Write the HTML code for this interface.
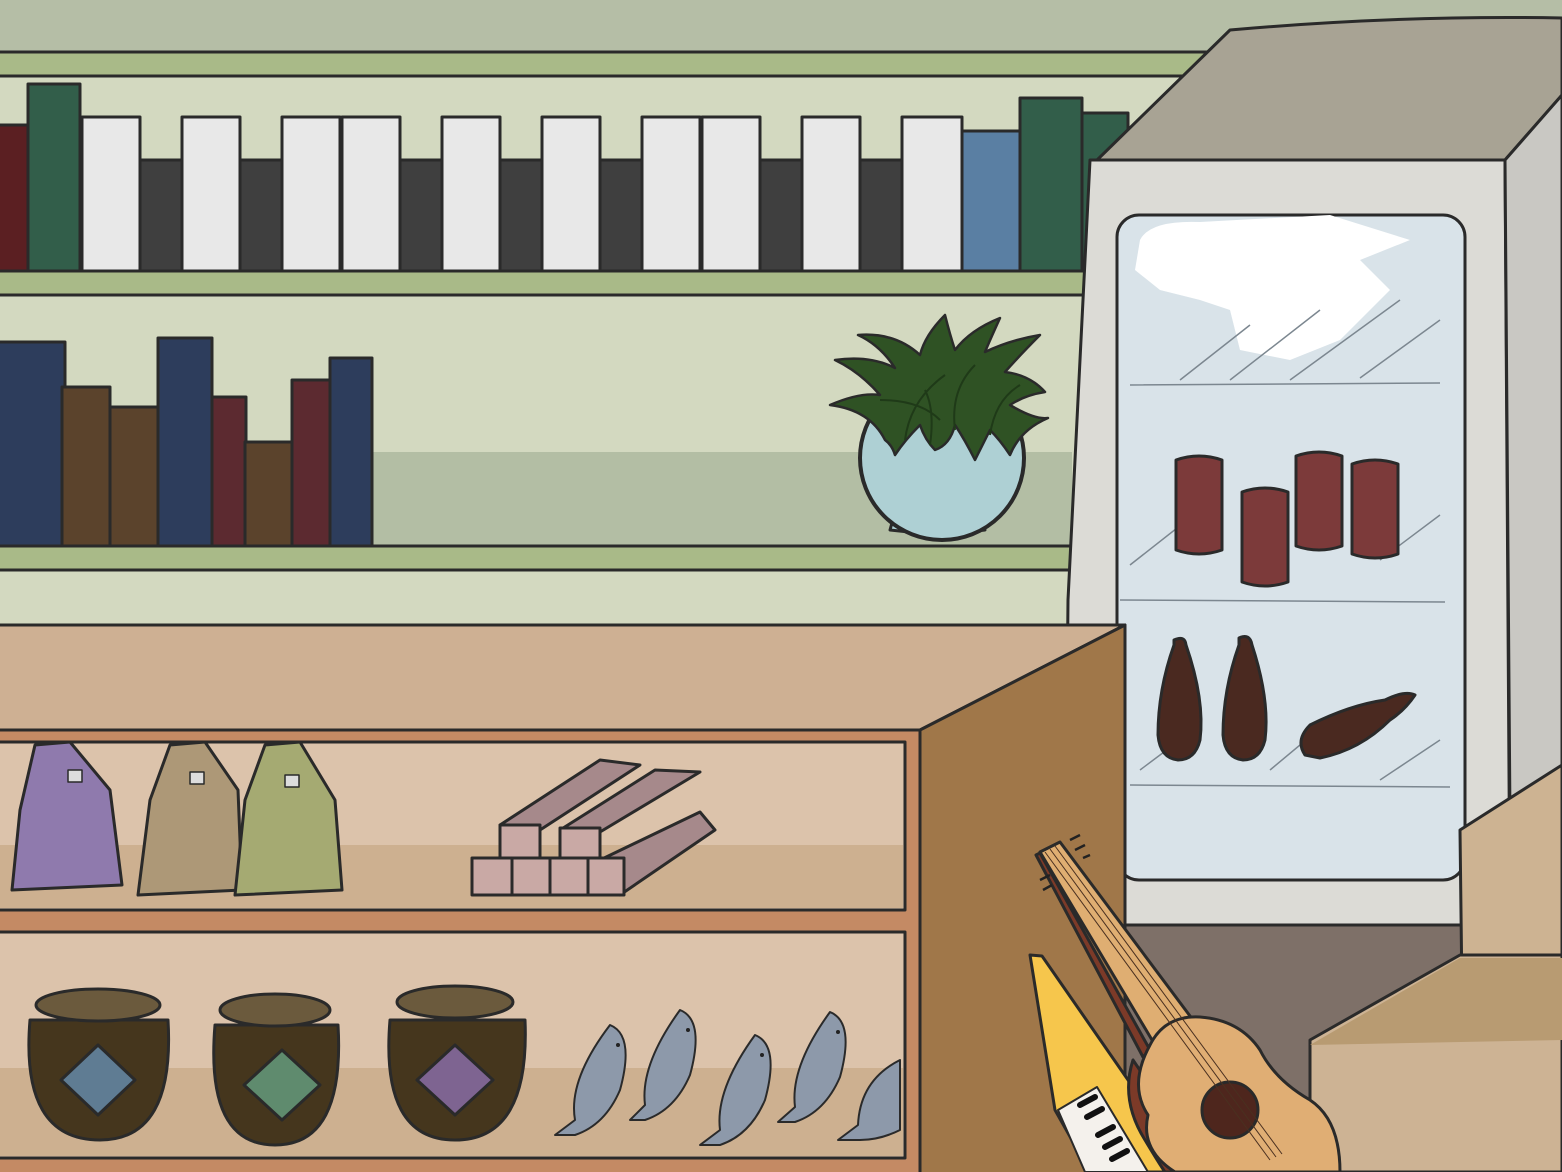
<!DOCTYPE html>
<html><head><meta charset="utf-8"><style>html,body{margin:0;padding:0;background:#d3d9c0}svg{display:block}</style></head>
<body>
<svg width="1562" height="1172" viewBox="0 0 1562 1172" xmlns="http://www.w3.org/2000/svg" stroke="#2a2a2a" stroke-width="3" stroke-linejoin="round">
<rect x="0" y="0" width="1562" height="1172" fill="#d3d9c0" stroke="none"/>
<rect x="0" y="0" width="1562" height="52" fill="#b5bea6" stroke="none"/>
<rect x="-5" y="52" width="1240" height="24" fill="#a9ba88"/>
<rect x="372" y="452" width="700" height="94" fill="#b3bea4" stroke="none"/>
<g>
<rect x="-5" y="125" width="33" height="147" fill="#5b1f22"/>
<rect x="28" y="84" width="52" height="188" fill="#325e4a"/>
<rect x="140" y="160" width="42" height="112" fill="#3f3f3f"/>
<rect x="240" y="160" width="42" height="112" fill="#3f3f3f"/>
<rect x="400" y="160" width="42" height="112" fill="#3f3f3f"/>
<rect x="500" y="160" width="42" height="112" fill="#3f3f3f"/>
<rect x="600" y="160" width="42" height="112" fill="#3f3f3f"/>
<rect x="760" y="160" width="42" height="112" fill="#3f3f3f"/>
<rect x="860" y="160" width="42" height="112" fill="#3f3f3f"/>
<rect x="82" y="117" width="58" height="155" fill="#e8e8e8"/>
<rect x="182" y="117" width="58" height="155" fill="#e8e8e8"/>
<rect x="282" y="117" width="58" height="155" fill="#e8e8e8"/>
<rect x="342" y="117" width="58" height="155" fill="#e8e8e8"/>
<rect x="442" y="117" width="58" height="155" fill="#e8e8e8"/>
<rect x="542" y="117" width="58" height="155" fill="#e8e8e8"/>
<rect x="642" y="117" width="58" height="155" fill="#e8e8e8"/>
<rect x="702" y="117" width="58" height="155" fill="#e8e8e8"/>
<rect x="802" y="117" width="58" height="155" fill="#e8e8e8"/>
<rect x="902" y="117" width="60" height="155" fill="#e8e8e8"/>
<rect x="962" y="131" width="58" height="141" fill="#5a7fa3"/>
<rect x="1020" y="98" width="62" height="174" fill="#325e4a"/>
<rect x="1082" y="113" width="46" height="159" fill="#325e4a"/>
</g>
<rect x="-5" y="271" width="1100" height="24" fill="#a9ba88"/>
<rect x="-5" y="342" width="70" height="205" fill="#2d3d5c"/>
<rect x="62" y="387" width="48" height="160" fill="#5b432c"/>
<rect x="110" y="407" width="48" height="140" fill="#5b432c"/>
<rect x="158" y="338" width="54" height="209" fill="#2d3d5c"/>
<rect x="212" y="397" width="34" height="150" fill="#5c2a30"/>
<rect x="245" y="442" width="48" height="105" fill="#5b432c"/>
<rect x="292" y="380" width="38" height="167" fill="#5c2a30"/>
<rect x="330" y="358" width="42" height="189" fill="#2d3d5c"/>
<rect x="-5" y="546" width="1080" height="24" fill="#a9ba88"/>
<!-- plant -->
<path d="M895 512 L890 530 Q940 536 985 530 L982 512 Z" fill="#aed0d4"/>
<circle cx="942" cy="458" r="82" fill="#aed0d4" stroke-width="4"/>
<path d="M885 440 Q870 410 830 405 Q860 392 880 395 Q860 372 835 360 Q870 355 895 368 Q880 345 858 335 Q895 332 920 355 Q925 335 945 315 Q950 335 955 350 Q970 330 1000 318 Q990 340 985 352 Q1010 340 1040 335 Q1020 355 1005 372 Q1030 375 1045 392 Q1025 395 1010 405 Q1035 420 1048 418 Q1020 430 1010 455 Q1000 440 990 430 Q980 450 975 460 Q965 440 955 425 Q950 445 935 450 Q925 440 920 425 Q905 440 895 455 Q892 445 885 440 Z" fill="#2f5224" stroke-width="2.5"/>
<g stroke="#1f3a18" stroke-width="2" fill="none">
<path d="M905 440 Q910 400 945 375 M955 430 Q950 390 975 365 M990 435 Q995 400 1020 385 M930 445 Q935 410 925 390 M880 400 Q920 400 940 420"/>
</g>
<!-- fridge -->
<rect x="1095" y="880" width="470" height="300" fill="#7e7068" stroke="none"/>
<path d="M1095 162 L1230 30 Q1400 15 1562 18 L1562 95 L1505 160 Z" fill="#a8a394"/>
<path d="M1090 160 L1505 160 L1510 925 L1065 925 L1068 600 Z" fill="#dcdbd6"/>
<path d="M1505 160 L1562 95 L1562 790 L1510 820 Z" fill="#c9c8c3"/>
<rect x="1117" y="215" width="348" height="665" rx="22" fill="#d9e3e9"/>
<path d="M1140 240 Q1150 220 1200 222 L1330 215 L1410 240 L1360 260 L1390 290 L1340 340 L1290 360 L1240 350 L1230 310 L1200 300 L1160 290 L1135 270 Z" fill="#fff" stroke="none"/>
<g stroke="#7c8790" stroke-width="1.5" fill="none">
<path d="M1130 385 L1440 383 M1120 600 L1445 602 M1130 785 L1450 787"/>
<path d="M1180 380 L1250 325 M1230 380 L1320 310 M1290 380 L1400 300 M1360 378 L1440 320 M1130 565 L1200 510 M1380 560 L1440 515 M1140 770 L1180 740 M1270 770 L1330 720 M1380 780 L1440 740"/>
</g>
<g fill="#7c3a3a">
<path d="M1176 460 Q1199 452 1222 460 L1222 550 Q1199 558 1176 550 Z"/>
<path d="M1242 492 Q1265 484 1288 492 L1288 582 Q1265 590 1242 582 Z"/>
<path d="M1296 456 Q1319 448 1342 456 L1342 546 Q1319 554 1296 546 Z"/>
<path d="M1352 464 Q1375 456 1398 464 L1398 554 Q1375 562 1352 554 Z"/>
</g>
<g fill="#4a2920">
<path d="M1174 640 Q1185 635 1186 645 Q1205 700 1200 740 Q1195 760 1178 760 Q1160 758 1158 735 Q1158 690 1174 645 Z"/>
<path d="M1239 638 Q1250 633 1252 645 Q1270 700 1265 740 Q1260 760 1243 760 Q1225 758 1223 735 Q1223 690 1239 645 Z"/>
<path d="M1305 755 Q1295 740 1310 725 Q1350 705 1385 700 Q1405 690 1415 695 Q1405 710 1390 720 Q1360 750 1320 758 Z"/>
</g>
<path d="M1460 830 L1562 765 L1562 995 L1462 995 Z" fill="#cdb392"/>
<path d="M1310 1040 L1460 955 L1562 955 L1562 1172 L1310 1172 Z" fill="#cdb394"/>
<path d="M1310 1045 L1460 958 L1562 958 L1562 1040 Z" fill="#b89b72" stroke="none"/>
<!-- counter -->
<path d="M-5 625 L1125 625 L920 730 L-5 730 Z" fill="#ceb093"/>
<path d="M920 730 L1125 625 L1125 1180 L920 1180 Z" fill="#a07749"/>
<rect x="-5" y="730" width="925" height="450" fill="#c48a64"/>
<rect x="-5" y="742" width="910" height="168" fill="#dcc3ab"/>
<rect x="-3" y="845" width="906" height="63" fill="#cdb090" stroke="none"/>
<rect x="-5" y="932" width="910" height="226" fill="#dcc3ab"/>
<rect x="-3" y="1068" width="906" height="88" fill="#cdb090" stroke="none"/>
<path d="M35 745 L70 742 L110 790 L122 885 L12 890 L20 810 Z" fill="#8f7aad"/>
<path d="M170 745 L205 742 L238 790 L242 890 L138 895 L150 800 Z" fill="#ad9877"/>
<path d="M265 745 L300 742 L335 800 L342 890 L235 895 L245 800 Z" fill="#a5aa72"/>
<rect x="68" y="770" width="14" height="12" fill="#ddd" stroke-width="1.5"/>
<rect x="190" y="772" width="14" height="12" fill="#ddd" stroke-width="1.5"/>
<rect x="285" y="775" width="14" height="12" fill="#ddd" stroke-width="1.5"/>
<g fill="#a6898b">
<path d="M500 825 L600 760 L640 765 L540 830 Z"/>
<path d="M560 830 L655 770 L700 772 L600 832 Z"/>
<path d="M600 860 L700 812 L715 830 L620 895 Z"/>
<rect x="500" y="825" width="40" height="35" fill="#c9a9a5"/>
<rect x="560" y="828" width="40" height="32" fill="#c9a9a5"/>
<rect x="472" y="858" width="40" height="37" fill="#c9a9a5"/>
<rect x="512" y="858" width="38" height="37" fill="#c9a9a5"/>
<rect x="550" y="858" width="38" height="37" fill="#c9a9a5"/>
<rect x="588" y="858" width="36" height="37" fill="#c9a9a5"/>
</g>
<g>
<path d="M30 1020 Q20 1140 100 1140 Q175 1140 168 1020 Z" fill="#45361d"/>
<ellipse cx="98" cy="1005" rx="62" ry="16" fill="#6b5a3d"/>
<path d="M98 1045 L135 1080 L98 1115 L61 1080 Z" fill="#5f7c93"/>
<path d="M215 1025 Q205 1145 275 1145 Q345 1145 338 1025 Z" fill="#45361d"/>
<ellipse cx="275" cy="1010" rx="55" ry="16" fill="#6b5a3d"/>
<path d="M282 1050 L320 1085 L282 1120 L244 1085 Z" fill="#5f8b6e"/>
<path d="M390 1020 Q380 1140 455 1140 Q530 1140 525 1020 Z" fill="#45361d"/>
<ellipse cx="455" cy="1002" rx="58" ry="16" fill="#6b5a3d"/>
<path d="M455 1045 L493 1080 L455 1115 L417 1080 Z" fill="#7e6491"/>
</g>
<g fill="#8d99aa" stroke-width="2">
<path d="M610 1025 Q635 1035 620 1090 Q605 1125 575 1135 L555 1135 L575 1120 Q568 1080 610 1025 Z"/>
<path d="M680 1010 Q705 1020 690 1075 Q675 1110 645 1120 L630 1120 L645 1105 Q640 1065 680 1010 Z"/>
<path d="M755 1035 Q780 1045 765 1100 Q750 1135 720 1145 L700 1145 L720 1130 Q715 1090 755 1035 Z"/>
<path d="M830 1012 Q855 1022 840 1077 Q825 1112 795 1122 L778 1122 L795 1107 Q790 1067 830 1012 Z"/>
<path d="M900 1060 L900 1130 Q880 1140 860 1140 L838 1140 L858 1125 Q860 1080 900 1060 Z"/>
</g>
<g fill="#222" stroke="none"><circle cx="618" cy="1045" r="2"/><circle cx="688" cy="1030" r="2"/><circle cx="762" cy="1055" r="2"/><circle cx="838" cy="1032" r="2"/></g>
<!-- keyboard -->
<path d="M1030 955 L1042 956 L1135 1090 L1165 1172 L1090 1172 L1055 1110 Z" fill="#f6c64c"/>
<path d="M1058 1110 L1097 1087 L1148 1172 L1085 1172 Z" fill="#f4f1ec" stroke-width="2"/>
<g stroke="#111" stroke-width="6" stroke-linecap="round">
<path d="M1080 1105 L1095 1097 M1087 1117 L1102 1109 M1098 1135 L1113 1127 M1105 1147 L1120 1139 M1112 1159 L1127 1151"/>
</g>
<!-- guitar -->
<path d="M1036 855 L1040 853 L1150 1050 L1143 1057 Z" fill="#7c3a28"/>
<path d="M1133 1060 Q1120 1100 1145 1140 Q1160 1165 1165 1172 L1185 1172 Q1160 1130 1160 1100 Z" fill="#7c3a28"/>
<path d="M1040 852 L1060 842 L1193 1020 L1155 1045 Z" fill="#dfae72"/>
<path d="M1150 1045 Q1165 1015 1200 1017 Q1240 1020 1260 1050 Q1275 1080 1310 1100 Q1340 1120 1340 1172 L1175 1172 Q1140 1150 1148 1115 Q1128 1085 1150 1045 Z" fill="#e0ae74"/>
<circle cx="1230" cy="1110" r="28" fill="#4e261d"/>
<g stroke="#4a3020" stroke-width="1">
<path d="M1045 852 L1270 1160 M1050 849 L1276 1157 M1055 846 L1282 1154"/>
</g>
<g stroke="#222" stroke-width="2.5">
<path d="M1070 840 L1080 835 M1075 850 L1085 845 M1083 858 L1090 855 M1040 880 L1050 875 M1043 890 L1052 885"/>
</g>
</svg>
</body></html>
